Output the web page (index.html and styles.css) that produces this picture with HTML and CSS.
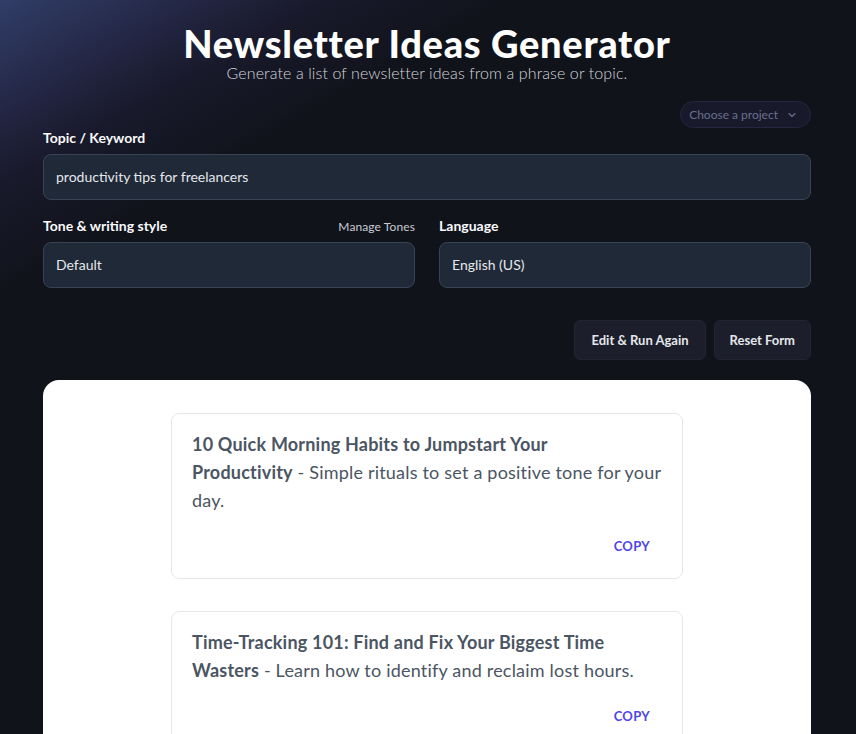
FILE: index.html
```html
<!DOCTYPE html>
<html lang="en">
<head>
  <meta charset="UTF-8">
  <meta name="viewport" content="width=device-width, initial-scale=1.0">
  <title>Newsletter Ideas Generator</title>
  <link rel="stylesheet" href="styles.css">
</head>
<body>

<div class="glow"></div>

<main class="page">
  <header class="hero">
    <h1>Newsletter Ideas Generator</h1>
    <p>Generate a list of newsletter ideas from a phrase or topic.</p>
  </header>

  <div class="project-row">
    <button class="project-pill" type="button">
      Choose a project
      <svg width="12" height="12" viewBox="0 0 24 24" fill="none" stroke="currentColor" stroke-width="2.2" stroke-linecap="round" stroke-linejoin="round"><path d="M6 9l6 6 6-6"/></svg>
    </button>
  </div>

  <form class="gen-form">
    <div class="field">
      <div class="field-head"><label for="topic">Topic / Keyword</label></div>
      <div class="box" id="topic">productivity tips for freelancers</div>
    </div>

    <div class="field-row">
      <div class="field">
        <div class="field-head">
          <label for="tone">Tone &amp; writing style</label>
          <a class="manage" href="#">Manage Tones</a>
        </div>
        <div class="box" id="tone">Default</div>
      </div>
      <div class="field">
        <div class="field-head"><label for="lang">Language</label></div>
        <div class="box" id="lang">English (US)</div>
      </div>
    </div>

    <div class="actions">
      <button type="button" class="btn">Edit &amp; Run Again</button>
      <button type="button" class="btn">Reset Form</button>
    </div>
  </form>

  <!-- generated ideas; title and dash kept together with a no-break space -->
  <section class="results">
    <div class="idea">
      <p><strong>10 Quick Morning Habits to Jumpstart Your Productivity</strong>&nbsp;- Simple rituals to set a positive tone for your day.</p>
      <div class="idea-foot"><button type="button" class="copy">COPY</button></div>
    </div>
    <div class="idea">
      <p><strong>Time-Tracking 101: Find and Fix Your Biggest Time Wasters</strong>&nbsp;- Learn how to identify and reclaim lost hours.</p>
      <div class="idea-foot"><button type="button" class="copy">COPY</button></div>
    </div>
    <div class="idea">
      <p><strong>Setting Boundaries With Clients</strong>&nbsp;- Protect your focus without losing work.</p>
      <div class="idea-foot"><button type="button" class="copy">COPY</button></div>
    </div>
  </section>
</main>

</body>
</html>
```

FILE: styles.css
```css
body { margin: 0; padding-right: 2px; background-color: #11131b; color: #f3f4f6; font-family: "Lato", "Open Sans", Arial, sans-serif; position: relative; overflow-x: hidden; }
.glow { position: absolute; top: 0; left: 0; width: 600px; height: 300px; pointer-events: none;
  background: linear-gradient(150deg, rgba(52, 66, 112, 0.9) 0%, rgba(46, 50, 92, 0.65) 17%, rgba(36, 34, 66, 0.4) 29%, rgba(17, 19, 27, 0) 46%); }
.page { position: relative; max-width: 768px; margin: 0 auto; padding: 23px 0 0; }

.hero { text-align: center; }
.hero h1 { margin: 0; font-size: 38px; font-weight: 900; line-height: 40px; color: #ffffff; letter-spacing: 0.7px; }
.hero p { margin: 0; font-size: 16px; font-weight: 300; line-height: 20px; color: #d1d5db; letter-spacing: 0.1px; }

.project-row { display: flex; justify-content: flex-end; margin-top: 18px; }
.project-pill { display: flex; align-items: center; gap: 8px; height: 27px; padding: 0 12px 0 8px; border-radius: 999px; border: 1px solid #252640; background-color: #181a2b; color: #6b6e8e; font-family: inherit; font-size: 12px; }

.gen-form { margin-top: 1px; }
.field { display: flex; flex-direction: column; }
.field-head { display: flex; justify-content: space-between; align-items: baseline; height: 18px; margin-bottom: 7px; }
.field-head label { font-size: 14px; font-weight: 700; color: #f9fafb; }
.manage { font-size: 12px; color: #c9ccd3; text-decoration: none; letter-spacing: 0.1px; }
.box { height: 44px; line-height: 44px; padding: 0 12px; border: 1px solid #3a4256; border-radius: 8px; background-color: #1f2937; color: #e5e7eb; font-size: 14px; }
.field-row { display: grid; grid-template-columns: 1fr 1fr; gap: 24px; margin-top: 17px; }

.actions { display: flex; justify-content: flex-end; gap: 8px; margin-top: 32px; }
.btn { height: 40px; padding: 0 16px; border: 1px solid #222532; border-radius: 6px; background-color: #1c1f2b; color: #e5e7eb; font-family: inherit; font-size: 13px; font-weight: 700; }
.btn + .btn { padding: 0 15px; }

.results { margin-top: 20px; padding: 33px 0 40px; background-color: #ffffff; border-radius: 16px; }
.idea { max-width: 470px; margin: 0 auto 32px; padding: 16px 20px; border: 1px solid #e5e7eb; border-radius: 8px; }
.idea p { margin: 0; font-size: 18px; line-height: 28px; color: #4b5563; letter-spacing: 0.2px; }
.idea strong { font-weight: 700; }
.idea-foot { display: flex; justify-content: flex-end; margin-top: 16px; }
.copy { padding: 8px 12px; border: 0; background: none; color: #4f46e5; font-family: inherit; font-size: 13px; font-weight: 700; line-height: 16px; letter-spacing: 0.3px; }
```
